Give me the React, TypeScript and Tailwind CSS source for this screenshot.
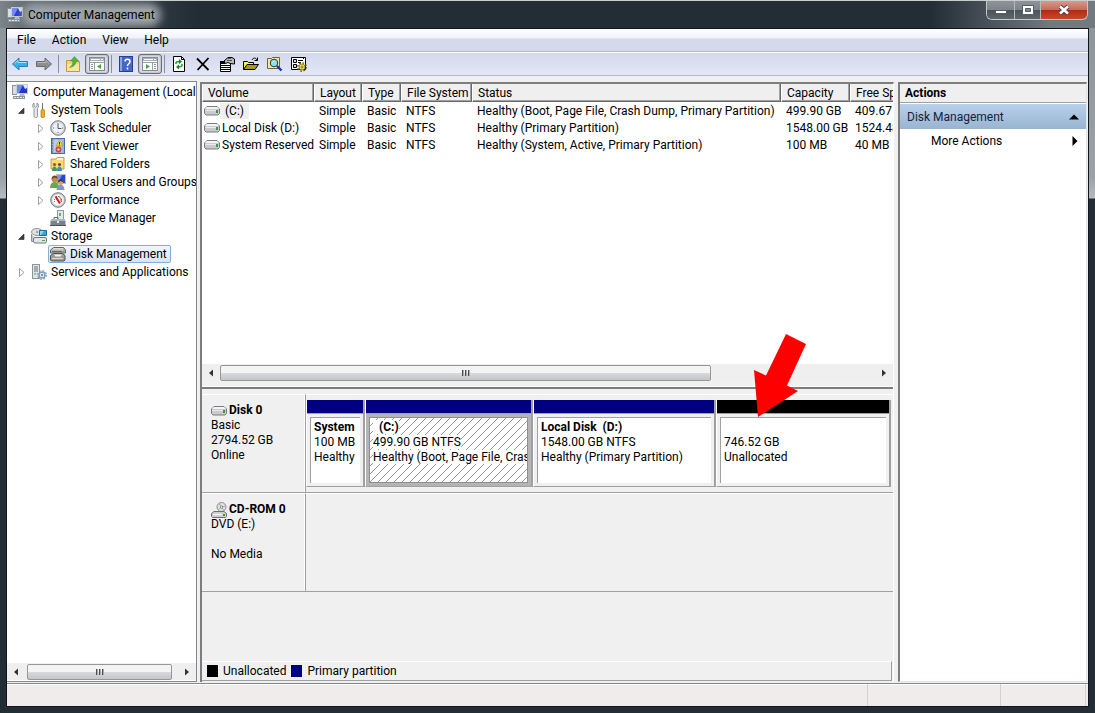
import type { ReactNode } from 'react';

type IconProps = { className?: string };

function Svg({ children, className = 'w-4 h-4', box = '0 0 16 16' }: { children: ReactNode; className?: string; box?: string }) {
  return (
    <svg viewBox={box} className={`${className} shrink-0`} fill="none" aria-hidden="true">
      {children}
    </svg>
  );
}

function ComputerIcon({ className }: IconProps) {
  return (
    <Svg className={className}>
      <rect x="0.5" y="1.5" width="4" height="9" fill="#d9dde0" stroke="#8a9299" />
      <rect x="4.5" y="0.5" width="11" height="9" fill="#2438c8" stroke="#c9cdd2" />
      <path d="M5 1h6L7 9H5z" fill="#6f8df0" />
      <path d="M11 1h4v3l-2 1z" fill="#dfe6fb" />
      <path d="M8 10h4l1 2H7z" fill="#b5bbc1" />
      <path d="M1 12h12v3H1z" fill="#8d959b" />
      <path d="M2 13h2v1H2zM5 13h2v1H5zM8 13h2v1H8zM11 13h1v1h-1z" fill="#e9ecee" />
    </Svg>
  );
}

function ToolsIcon() {
  return (
    <Svg>
      <path d="M3 1v3l1.500 1L6 4V1c2 1 2 4 .5 5.500V14c0 2-3.500 2-3.500 0V6.500C1 5 1.500 2 3 1z" fill="#e4e7e9" stroke="#7d858b" strokeWidth="0.8" />
      <path d="M11 1h1v7h-1z" fill="#6f767b" />
      <rect x="10" y="7.500" width="3.500" height="8" rx="1" fill="#f4a916" stroke="#b87708" strokeWidth="0.700" />
    </Svg>
  );
}

function ClockIcon() {
  return (
    <Svg>
      <circle cx="8" cy="8" r="7.300" fill="#c9ccd0" stroke="#7c8084" />
      <circle cx="8" cy="8" r="5.500" fill="#eaf3fb" stroke="#dedede" />
      <path d="M8 4v4.500h3.500" stroke="#555" />
      <path d="M8 3v1M8 12v1M3 8h1M12 8h1" stroke="#8a6d3c" />
    </Svg>
  );
}

function EventIcon() {
  return (
    <Svg>
      <rect x="1.500" y="0.500" width="13" height="15" fill="#9db4dc" stroke="#486aa8" />
      <path d="M4 3h8M4 5h8M4 7h8M4 9h8M4 11h8M4 13h8" stroke="#dbe6f7" />
      <path d="M1 2h2M1 5h2M1 8h2M1 11h2M1 14h2" stroke="#4c5a6e" />
      <path d="M9.500 2l3.500 6H6z" fill="#ffd42a" stroke="#b38b00" strokeWidth="0.600" />
      <path d="M9.500 4v2M9.500 6.500v1" stroke="#333" />
      <circle cx="8.500" cy="11.500" r="3" fill="#d8432f" />
      <circle cx="8.500" cy="11.500" r="1.200" fill="#f7c6bd" />
    </Svg>
  );
}

function SharedFolderIcon() {
  return (
    <Svg>
      <path d="M1 3h5l1-1.500h7V13H1z" fill="#f6d97a" stroke="#c79f38" />
      <path d="M7 3h6" stroke="#fff7cf" strokeWidth="2" />
      <circle cx="4.500" cy="8.500" r="1.600" fill="#8e5a2b" />
      <circle cx="9.500" cy="8.500" r="1.600" fill="#6d4a2c" />
      <path d="M2 15c0-6 5-6 5 0z" fill="#3f9b5a" />
      <path d="M7 15c0-6 5-6 5 0z" fill="#3b8fc4" />
    </Svg>
  );
}

function UsersIcon() {
  return (
    <Svg>
      <rect x="6.500" y="0.500" width="9" height="9" fill="#2b48cc" stroke="#bcc2c9" />
      <path d="M7 1h5L8 9H7z" fill="#7995f0" />
      <circle cx="4.500" cy="5.500" r="2.800" fill="#c98a52" />
      <path d="M1.500 5.500c0-5 6-5 6-1L4.500 3.500z" fill="#704321" />
      <path d="M0 14c0-8 9-8 9 0z" fill="#6aa84d" />
      <circle cx="10.500" cy="8.500" r="2.500" fill="#d9a26b" />
      <path d="M8 8.500c0-4 5-4 5-.5L10.500 7z" fill="#3d2b20" />
      <path d="M6.500 16c0-7 8-7 8 0z" fill="#7f96c2" />
    </Svg>
  );
}

function PerformanceIcon() {
  return (
    <Svg>
      <circle cx="8" cy="8" r="7.300" fill="#c4c7ca" stroke="#797d80" />
      <circle cx="8" cy="8" r="5.500" fill="#fff" stroke="#e3e3e3" />
      <path d="M4.500 10V6M11.500 10V6M6 4.500h4" stroke="#7a7a7a" strokeDasharray="1 1" />
      <path d="M5.500 4.500l4.500 7" stroke="#d01818" strokeWidth="2" />
      <path d="M9 4.500c1.500 1 2.500 2.500 2 5" stroke="#d01818" />
    </Svg>
  );
}

function DeviceIcon() {
  return (
    <Svg>
      <rect x="7.500" y="0.500" width="6" height="9" fill="#e6e9eb" stroke="#8f979c" />
      <path d="M9 3h2v3H9z" fill="#58b85a" />
      <path d="M4 9V7.500h4V9" stroke="#5c656c" />
      <path d="M2 9h12l1.500 2v4H0.500v-4z" fill="#77838d" />
      <path d="M2 9h12l1.500 2H0.500z" fill="#aeb8c0" />
      <path d="M0 15h16v1H0z" fill="#4b545b" />
      <path d="M7 11h2v2H7z" fill="#e8ecef" />
    </Svg>
  );
}

function StorageIcon() {
  return (
    <Svg>
      <ellipse cx="6" cy="4" rx="5.500" ry="3.500" fill="#dfe3e2" stroke="#8d9392" />
      <circle cx="6" cy="4" r="1.200" fill="#a1a7a6" />
      <path d="M8.500 2.500h7v5h-7z" fill="#35a3dc" stroke="#1c6c9c" />
      <path d="M9 3h4l-3 4H9z" fill="#90d6f6" />
      <path d="M0.500 6v7.500h6" stroke="#8d9392" fill="#c5cac9" />
      <rect x="2.500" y="9.500" width="13" height="5.500" rx="1.500" fill="#e3e6e8" stroke="#71787d" />
      <path d="M11 12h3v1h-3z" fill="#2db52d" />
    </Svg>
  );
}

function DiskStackIcon() {
  return (
    <Svg>
      <path d="M3.500 1.500h10l2 2.500v3h-15V4z" fill="#b5b4b0" stroke="#63625d" />
      <path d="M3.500 2h9l1 1.500H2.500z" fill="#dededc" />
      <path d="M2 5.500h10" stroke="#6b6a65" />
      <path d="M3.500 7.500h9l2.500 2v4.500l-1 1H1.500l-1-1V9.500z" fill="#9d9c97" stroke="#55544f" />
      <path d="M4 8.500h8l-1.500 2H5.500z" fill="#f4f4f2" />
      <path d="M2 12.500h11" stroke="#dcdcd8" />
      <path d="M13 4.500h1.500v1.500H13z" fill="#3fd13f" />
    </Svg>
  );
}

function ServicesIcon() {
  return (
    <Svg>
      <rect x="1.500" y="0.500" width="7" height="14" fill="#dfe4e8" stroke="#8c959b" />
      <path d="M3 3h4M3 5h4M3 7h4" stroke="#6d767c" />
      <path d="M3 10h2" stroke="#3bb03b" />
      <circle cx="11" cy="11" r="3" stroke="#7f9db9" strokeWidth="1.600" fill="#e5eef6" />
      <circle cx="11" cy="11" r="4.400" stroke="#7f9db9" strokeWidth="1.200" strokeDasharray="1.700 1.750" />
      <circle cx="11" cy="11" r="1" fill="#54728e" />
    </Svg>
  );
}

function DriveIcon() {
  return (
    <Svg className="w-4 h-2.5" box="0 0 16 10">
      <path d="M3 0.500h10l2.500 2.500v4.500l-1.500 1.500H2L0.500 7.500V3z" fill="#c9c9ce" stroke="#7b7b80" />
      <path d="M3 1h10l2 2H1z" fill="#f4f4f6" />
      <path d="M1.500 4.500h11" stroke="#e9e9ee" />
      <path d="M12 4h2v3h-2z" fill="#3c9a3c" />
    </Svg>
  );
}

function CdDriveIcon() {
  return (
    <Svg>
      <circle cx="10.500" cy="5" r="4.500" fill="#dfe3df" stroke="#8c8f8c" />
      <path d="M10.500 5L8 1.500M10.500 5l4-1" stroke="#cf8bd6" />
      <path d="M10.500 5l-3 2.500M10.500 5l2 3" stroke="#7fca82" />
      <circle cx="10.500" cy="5" r="1.200" fill="#fff" stroke="#888" />
      <path d="M3 9.500h10l2.500 2v3l-1 1H1.500l-1-1v-3z" fill="#cfcfd3" stroke="#6f6f74" />
      <path d="M2 12.500h9" stroke="#f8f8f8" />
      <path d="M12 12h2v2h-2z" fill="#3c9a3c" />
    </Svg>
  );
}

function PaneIcon({ flip = false }: { flip?: boolean }) {
  return (
    <Svg>
      <rect x="0.500" y="1.500" width="15" height="13" fill="#fff" stroke="#858b92" />
      <path d="M1 2h14v3H1z" fill="#a9afb5" />
      <path d="M2 3.500h9M12 3.500h2" stroke="#fff" />
      <path d="M1 6.500h14" stroke="#9aa0a6" />
      {flip ? (
        <>
          <path d="M10.500 6v8" stroke="#9aa0a6" />
          <path d="M12 8.500h2M12 10.500h2M12 12.500h2" stroke="#8f969c" />
          <path d="M4 8l4 2.500L4 13z" fill="#3eaa3e" />
        </>
      ) : (
        <>
          <path d="M5.500 6v8" stroke="#9aa0a6" />
          <path d="M2 8.500h2M2 10.500h2M2 12.500h2" stroke="#8f969c" />
          <path d="M12 8l-4 2.500L12 13z" fill="#3eaa3e" />
        </>
      )}
    </Svg>
  );
}

function ToolButton({ label, pressed = false, children }: { label: string; pressed?: boolean; children: ReactNode }) {
  return (
    <button
      type="button"
      aria-label={label}
      className={
        pressed
          ? 'w-6 h-5 flex items-center justify-center rounded-[3px] border border-[#6b6e78] bg-[#dadde6] shadow-[inset_0_0_2px_#8a8d96]'
          : 'w-6 h-5 flex items-center justify-center'
      }
    >
      {children}
    </button>
  );
}

function Separator() {
  return <div className="w-px h-[18px] mx-0.5 bg-[#8b8f9c]" />;
}

function Toolbar() {
  return (
    <div className="h-6 shrink-0 flex items-center pl-px border-t border-b border-t-white border-b-[#b3b7c6] bg-linear-to-b from-[#d3d9ec] to-[#e3e7f6]">
      <ToolButton label="Back">
        <Svg>
          <path d="M0.500 8L7 2v3.500h8.500v5H7V14z" fill="#35b0ea" stroke="#2b7db5" />
          <path d="M2.500 7.500L6 4.500v2h8.500" stroke="#a4e0f8" />
        </Svg>
      </ToolButton>
      <ToolButton label="Forward">
        <Svg>
          <path d="M15.500 8L9 2v3.500H0.500v5H9V14z" fill="#8e8e8e" stroke="#6a6a6a" />
          <path d="M1.500 6.500H10v-2L13.500 7.500" stroke="#b9b9b9" />
        </Svg>
      </ToolButton>
      <Separator />
      <ToolButton label="Up one level">
        <Svg>
          <path d="M1.500 4.500h5l1 1h7v10h-13z" fill="#f2d279" stroke="#c69a3b" />
          <path d="M2 8h12v7H2z" fill="#fae6a0" />
          <path d="M4.500 11.500C7 10 8 8 8 5H5.500L9.500 0.500l4 4.500H11c0 4-3 6-6.500 6.500z" fill="#53b63c" stroke="#2f8f20" strokeWidth="0.500" />
        </Svg>
      </ToolButton>
      <ToolButton label="Show/Hide Console Tree" pressed>
        <PaneIcon />
      </ToolButton>
      <Separator />
      <ToolButton label="Help">
        <Svg>
          <rect x="1.500" y="0.500" width="13" height="15" fill="#4467c8" stroke="#263f92" />
          <path d="M2 1h2v14H2z" fill="#8ca5e6" />
          <path d="M7 5.500C7 2.500 12 2.500 12 5.500C12 8 9.500 7.500 9.500 10M9.500 11.500v2" stroke="#fff" strokeWidth="1.500" />
        </Svg>
      </ToolButton>
      <ToolButton label="Show/Hide Action Pane" pressed>
        <PaneIcon flip />
      </ToolButton>
      <Separator />
      <ToolButton label="Refresh">
        <Svg>
          <path d="M2.500 0.500h8l3 3v12h-11z" fill="#fff" stroke="#000" />
          <path d="M10.500 0.500v3h3" stroke="#000" />
          <path d="M5 8V6.500C5 5.500 6 5.500 9 5.500M11 8v1.500c0 1-1 1.500-4 1.500" stroke="#0b8a1c" strokeWidth="1.300" />
          <path d="M8 3l3 2.500L8 8zM8 8.500L5 11l3 2.500z" fill="#0b8a1c" />
        </Svg>
      </ToolButton>
      <ToolButton label="Delete">
        <Svg>
          <path d="M2 2.500l11.500 11.500M13.500 2L2.500 14" stroke="#000" strokeWidth="1.800" />
        </Svg>
      </ToolButton>
      <ToolButton label="Properties">
        <Svg>
          <path d="M1.500 5.500h10v10h-10z" fill="#fff" stroke="#000" />
          <path d="M1 5h5v3H1z" fill="#000" />
          <path d="M2 9.500h9M2 11.500h9M2 13.500h9" stroke="#000" />
          <path d="M5 5l4-3.500h4L15.500 3v5L11 7.500 9 6.500 6.500 7.500z" fill="#b9b9b9" stroke="#000" />
          <path d="M8 4.500h5M9 2.500h3" stroke="#555" />
        </Svg>
      </ToolButton>
      <ToolButton label="Open">
        <Svg>
          <path d="M0.500 13.500v-8h4l1 1h5v2" fill="#fff04a" stroke="#000" />
          <path d="M0.500 13.500L4 8.500h11.500L12 13.500z" fill="#a8991c" stroke="#000" />
          <path d="M9 4c1-2.500 4-2.500 5 0M14.500 1.500v3h-3" stroke="#000" />
        </Svg>
      </ToolButton>
      <ToolButton label="Find">
        <Svg>
          <path d="M0.500 2.500h4l1-1h7v11h-12z" fill="#f4e9a0" stroke="#6c6446" />
          <circle cx="7" cy="7" r="3.800" fill="#86e4ee" stroke="#333" />
          <path d="M5.500 6.500l2-1.500" stroke="#fff" />
          <path d="M10 10l4.500 4.500" stroke="#1533b8" strokeWidth="2.400" />
        </Svg>
      </ToolButton>
      <ToolButton label="Settings">
        <Svg>
          <path d="M0.500 1.500h14v12H0.500z" fill="#fff" stroke="#000" />
          <path d="M2.500 3.500h3v3h-3zM2.500 8.500h3v3h-3z" stroke="#000" fill="#ddd" />
          <path d="M7 4.500h5M7 6.500h3M12 2.500h1" stroke="#000" />
          <circle cx="11" cy="11" r="4.200" stroke="#5d5310" strokeWidth="1.400" strokeDasharray="1.600 1.700" />
          <circle cx="11" cy="11" r="3" fill="#f7e23c" stroke="#6d6210" strokeWidth="0.700" />
          <circle cx="11" cy="11" r="1" fill="#fff" stroke="#000" strokeWidth="0.500" />
        </Svg>
      </ToolButton>
    </div>
  );
}

function TitleBar() {
  return (
    <header className="h-[27px] shrink-0 flex items-start justify-between pl-[7px] pr-[7px]">
      <div className="h-[27px] flex items-center gap-[5px]">
        <ComputerIcon className="w-4 h-4" />
        <h1 className="h-3 flex items-center rounded-full bg-[#9ba2a6] shadow-[0_0_8px_6px_#9ba2a6]">Computer Management</h1>
      </div>
      <div className="flex h-[19px] rounded-b-md border border-t-0 border-[#c3c8cb] overflow-hidden">
        <button type="button" aria-label="Minimize" className="w-7 flex items-center justify-center border-r border-[#b5babd] bg-[linear-gradient(to_bottom,#8d9498,#7d858a_50%,#4b545b_51%,#5d666c)]">
          <Svg className="w-3 h-3" box="0 0 12 12">
            <rect x="0.500" y="6.500" width="11" height="3" fill="#fff" stroke="#555d66" />
          </Svg>
        </button>
        <button type="button" aria-label="Maximize" className="w-[26px] flex items-center justify-center border-r border-[#b5babd] bg-[linear-gradient(to_bottom,#8d9498,#7d858a_50%,#4b545b_51%,#5d666c)]">
          <Svg className="w-3 h-3" box="0 0 12 12">
            <path d="M0.500 1.500h11v9h-11z" fill="#fff" stroke="#555d66" />
            <path d="M3.500 4.500h5v3h-5z" fill="#7b848b" stroke="#555d66" />
          </Svg>
        </button>
        <button type="button" aria-label="Close" className="w-[46px] flex items-center justify-center bg-[linear-gradient(to_bottom,#d59a8f,#c76a58_50%,#b02a12_51%,#c9472c)]">
          <Svg className="w-3 h-3" box="0 0 12 12">
            <path d="M2 2.500l8 7M10 2.500l-8 7" stroke="#5a3a44" strokeWidth="4.500" />
            <path d="M2 2.500l8 7M10 2.500l-8 7" stroke="#fff" strokeWidth="2.600" />
          </Svg>
        </button>
      </div>
    </header>
  );
}

function HScrollbar({ thumb }: { thumb: string }) {
  return (
    <div className="h-[17px] shrink-0 flex items-center bg-[#efefef]">
      <button type="button" aria-label="Scroll left" className="w-[18px] flex justify-center">
        <Svg className="w-1 h-2" box="0 0 4 8">
          <path d="M4 0.500v7L0 4z" fill="#333" />
        </Svg>
      </button>
      <div className="flex-1 h-4">
        <div className={`${thumb} h-4 flex items-center justify-center gap-px rounded-[2px] border border-[#979797] bg-linear-to-b from-[#f4f4f4] from-50% via-[#d9dadc] via-50% to-[#c4c5c8]`}>
          <span className="w-0.5 h-1.5 border-l border-[#4d4d4d] bg-[#aaa]" />
          <span className="w-0.5 h-1.5 border-l border-[#4d4d4d] bg-[#aaa]" />
          <span className="w-0.5 h-1.5 border-l border-[#4d4d4d] bg-[#aaa]" />
        </div>
      </div>
      <button type="button" aria-label="Scroll right" className="w-[18px] flex justify-center">
        <Svg className="w-1 h-2" box="0 0 4 8">
          <path d="M0 0.500v7L4 4z" fill="#333" />
        </Svg>
      </button>
    </div>
  );
}

function Expander({ state }: { state?: 'open' | 'closed' }) {
  return (
    <Svg className="w-2.5 h-2.5" box="0 0 10 10">
      {state === 'open' && <path d="M8 3v5.500H2.500z" fill="#404040" stroke="#262626" strokeWidth="0.600" />}
      {state === 'closed' && <path d="M3.500 1.500v8l4.500-4z" fill="#fff" stroke="#a0a0a0" />}
    </Svg>
  );
}

const tree: { label: string; level: 1 | 2; state?: 'open' | 'closed'; icon: ReactNode; selected?: boolean }[] = [
  { label: 'System Tools', level: 1, state: 'open', icon: <ToolsIcon /> },
  { label: 'Task Scheduler', level: 2, state: 'closed', icon: <ClockIcon /> },
  { label: 'Event Viewer', level: 2, state: 'closed', icon: <EventIcon /> },
  { label: 'Shared Folders', level: 2, state: 'closed', icon: <SharedFolderIcon /> },
  { label: 'Local Users and Groups', level: 2, state: 'closed', icon: <UsersIcon /> },
  { label: 'Performance', level: 2, state: 'closed', icon: <PerformanceIcon /> },
  { label: 'Device Manager', level: 2, icon: <DeviceIcon /> },
  { label: 'Storage', level: 1, state: 'open', icon: <StorageIcon /> },
  { label: 'Disk Management', level: 2, icon: <DiskStackIcon />, selected: true },
  { label: 'Services and Applications', level: 1, state: 'closed', icon: <ServicesIcon /> },
];

function ConsoleTree() {
  return (
    <nav className="w-[190px] shrink-0 flex flex-col border border-l-0 border-[#828790] bg-white overflow-hidden">
      <ul className="flex-1 pt-px whitespace-nowrap overflow-hidden">
        <li className="h-[18px] flex items-center gap-[5px] pl-[5px]">
          <ComputerIcon />
          Computer Management (Local
        </li>
        {tree.map((item) => (
          <li key={item.label} className={item.level === 1 ? 'h-[18px] flex items-center pl-[9px]' : 'h-[18px] flex items-center pl-7'}>
            <Expander state={item.state} />
            <span
              className={
                item.selected
                  ? 'h-[18px] flex items-center gap-1 ml-[3px] pl-px pr-[3px] rounded-[2px] border border-[#84acdd] bg-linear-to-b from-[#f0f6fe] to-[#d5e5fb]'
                  : 'h-[18px] flex items-center gap-1 ml-[5px]'
              }
            >
              {item.icon}
              {item.label}
            </span>
          </li>
        ))}
      </ul>
      <div className="pb-px">
        <HScrollbar thumb="w-[95%] ml-0.5" />
      </div>
    </nav>
  );
}

const columns = [
  { name: 'Volume', width: 'w-28' },
  { name: 'Layout', width: 'w-12' },
  { name: 'Type', width: 'w-[39px]' },
  { name: 'File System', width: 'w-[71px]' },
  { name: 'Status', width: 'w-[309px]' },
  { name: 'Capacity', width: 'w-[69px]' },
  { name: 'Free Space', width: 'w-[90px]' },
];

const volumes = [
  ['(C:)', 'Simple', 'Basic', 'NTFS', 'Healthy (Boot, Page File, Crash Dump, Primary Partition)', '499.90 GB', '409.67 GB'],
  ['Local Disk (D:)', 'Simple', 'Basic', 'NTFS', 'Healthy (Primary Partition)', '1548.00 GB', '1524.48 GB'],
  ['System Reserved', 'Simple', 'Basic', 'NTFS', 'Healthy (System, Active, Primary Partition)', '100 MB', '40 MB'],
];

function VolumeList() {
  return (
    <div className="flex-[283] min-h-0 overflow-hidden bg-white">
      <table className="w-[738px] table-fixed border-separate border-spacing-0 whitespace-nowrap">
        <thead>
          <tr>
            {columns.map((col) => (
              <th
                key={col.name}
                scope="col"
                className={`${col.width} h-[18px] px-[5px] pt-px pb-0 font-normal text-left bg-[#efefef] border-l border-l-white border-r border-r-[#696969] border-b border-b-[#696969] shadow-[inset_-1px_-1px_0_#a0a0a0]`}
              >
                {col.name}
              </th>
            ))}
          </tr>
        </thead>
        <tbody>
          {volumes.map((row, i) => (
            <tr key={row[0]}>
              {row.map((cell, j) => (
                <td key={j} className={j === 0 ? 'h-[17px] p-0 pl-0.5' : 'h-[17px] p-0 pl-[5px]'}>
                  {j === 0 ? (
                    <span className="flex items-center">
                      <DriveIcon />
                      <span className={i === 0 ? 'px-[5px] bg-[#efefef]' : 'pl-0.5'}>{cell}</span>
                    </span>
                  ) : (
                    cell
                  )}
                </td>
              ))}
            </tr>
          ))}
        </tbody>
      </table>
    </div>
  );
}

function DiskRow({ icon, name, lines, children }: { icon: ReactNode; name: string; lines: string[]; children?: ReactNode }) {
  return (
    <section className="h-[99px] flex border-b border-[#a0a0a0]">
      <div className="w-[104px] shrink-0 pt-2 pl-[9px] border-t border-t-white border-r border-r-[#a0a0a0] shadow-[inset_-1px_0_0_#fff] leading-[15px]">
        <h2 className="h-[15px] flex items-center gap-0.5 font-bold">
          {icon}
          {name}
        </h2>
        {lines.map((line, i) => (
          <p key={i} className="h-[15px]">{line}</p>
        ))}
      </div>
      <div className="flex-1 min-w-0 border-t border-white">{children}</div>
    </section>
  );
}

function Partition({ name, size, status, kind = 'primary', selected = false, children }: {
  name: string;
  size: string;
  status: string;
  kind?: 'primary' | 'unallocated';
  selected?: boolean;
  children?: ReactNode;
}) {
  return (
    <div className="relative min-w-0 flex flex-col border-l border-l-white border-r-2 border-b border-r-[#a0a0a0] border-b-[#a0a0a0]">
      <div className={kind === 'primary' ? 'h-[13px] bg-[#000080]' : 'h-[13px] bg-black'} />
      <div className={selected ? 'h-[73px] p-[3px] border-t border-[#a0a0a0] bg-[#b4b4b4]' : 'h-[73px] p-[3px] border-t border-[#a0a0a0]'}>
        <div
          className={
            selected
              ? 'h-full pt-0.5 pl-[3px] border border-[#909090] overflow-hidden whitespace-nowrap leading-[15px] bg-white bg-[linear-gradient(135deg,transparent_44%,#999_50%,transparent_56%)] bg-[length:8px_8px]'
              : 'h-full pt-0.5 pl-[3px] border-t border-l border-[#a0a0a0] overflow-hidden whitespace-nowrap leading-[15px] bg-white'
          }
        >
          <p className="h-[15px] font-bold whitespace-pre"><span className={selected ? 'bg-white' : ''}>{name}</span></p>
          <p><span className={selected ? 'bg-white' : ''}>{size}</span></p>
          <p><span className={selected ? 'bg-white' : ''}>{status}</span></p>
        </div>
      </div>
      {children}
    </div>
  );
}

function Legend() {
  return (
    <div className="h-5 mr-px mb-px shrink-0 flex items-center pl-[5px] gap-[5px] border-t border-t-white border-r border-r-[#a0a0a0] border-b border-b-[#a0a0a0]">
      <span className="flex items-center gap-[5px]">
        <i className="w-[11px] h-3 bg-black" />
        Unallocated
      </span>
      <span className="flex items-center gap-[5px]">
        <i className="w-[11px] h-3 bg-[#000080]" />
        Primary partition
      </span>
    </div>
  );
}

function DiskPane() {
  return (
    <div className="flex-[291] min-h-0 flex flex-col pt-[5px]">
      <div className="flex-1">
        <DiskRow icon={<DriveIcon />} name="Disk 0" lines={['Basic', '2794.52 GB', 'Online']}>
          <div className="grid grid-cols-[59fr_168fr_183fr_175fr] pt-[5px] pr-0.5">
            <Partition name="System" size="100 MB" status="Healthy" />
            <Partition name="  (C:)" size="499.90 GB NTFS" status="Healthy (Boot, Page File, Crash Dump, Primary Partition)" selected />
            <Partition name="Local Disk  (D:)" size="1548.00 GB NTFS" status="Healthy (Primary Partition)" />
            <Partition name="" size="746.52 GB" status="Unallocated" kind="unallocated">
              <svg viewBox="0 0 54 84" className="absolute left-9 -top-[66px] w-[54px] h-[84px]" aria-hidden="true">
                <path d="M33 0l20 10-19 41.500 11 5.500L5 83 1 36l12 5.500z" fill="#fe0000" />
              </svg>
            </Partition>
          </div>
        </DiskRow>
        <DiskRow icon={<CdDriveIcon />} name="CD-ROM 0" lines={['DVD (E:)', '', 'No Media']} />
      </div>
      <Legend />
    </div>
  );
}

function ActionsPane() {
  return (
    <aside className="w-[189px] mt-px mr-px shrink-0 flex flex-col border-t-2 border-l-2 border-r border-b border-t-[#7d7d7d] border-l-[#7d7d7d] border-r-[#e3e3e3] border-b-[#e3e3e3] bg-white">
      <h2 className="h-[19px] flex items-center pl-[5px] font-bold bg-[#efefef] border-b border-[#a0a0a0]">Actions</h2>
      <button type="button" className="h-[25px] mt-px flex items-center justify-between pl-[7px] pr-[7px] bg-linear-to-b from-[#b9d1ea] to-[#99b4d1] text-[#14233a]">
        Disk Management
        <Svg className="w-2.5 h-1.5" box="0 0 10 6">
          <path d="M5 0.500l5 5H0z" fill="#000" />
        </Svg>
      </button>
      <button type="button" className="h-6 flex items-center justify-between pl-[31px] pr-2">
        More Actions
        <Svg className="w-1.5 h-2.5" box="0 0 6 10">
          <path d="M0.500 0v10l5-5z" fill="#000" />
        </Svg>
      </button>
    </aside>
  );
}

export default function App() {
  return (
    <div className="h-screen flex flex-col font-[Roboto,'Open_Sans',sans-serif] text-[12px] leading-4 text-black border-t border-[#c8cdd0] bg-[linear-gradient(to_right,#7b8589,#59636a_3%,#3a444c_10%,#232d36_18%,#232d36_85%,#717a80_96%,#717a80)] overflow-hidden">
      <TitleBar />
      <div className="flex-1 min-h-0 flex flex-col px-[6px] pb-[6px] bg-[linear-gradient(to_bottom,#8d979b,#99a2a6_150px,#b5bcbf_170px,#232d36_171px)]">
        <div className="flex-1 min-h-0 flex flex-col border border-[#10161c] bg-[#f0f0f0]">
          <nav aria-label="Menu" className="h-[23px] shrink-0 flex items-center pl-[2px] border-b border-[#b3b7c6] bg-[linear-gradient(to_bottom,#fff,#f0f2fa_9px,#d4d9ec_10px,#d4d9ec)]">
            <button type="button" className="px-2">File</button>
            <button type="button" className="px-2">Action</button>
            <button type="button" className="px-2">View</button>
            <button type="button" className="px-2">Help</button>
          </nav>
          <Toolbar />
          <main className="flex-1 min-h-0 flex pt-[5px] pb-px">
            <ConsoleTree />
            <div className="flex-1 min-w-0 mt-px ml-[3px] mr-1 flex flex-col border-t-2 border-l-2 border-t-[#7d7d7d] border-l-[#7d7d7d] border-r border-r-white">
              <VolumeList />
              <HScrollbar thumb="w-3/4" />
              <div className="h-2 shrink-0 border-b-2 border-[#7d7d7d] shadow-[inset_0_-1px_0_#fff]" />
              <DiskPane />
            </div>
            <ActionsPane />
          </main>
          <footer className="h-[23px] shrink-0 flex justify-end pr-0.5 border-t border-[#828790] bg-[#f0eceb] shadow-[inset_0_1px_0_#fff]">
            <div className="w-[133px] border-l border-[#d2d2d2]" />
            <div className="w-[86px] border-l border-r border-[#d2d2d2]" />
          </footer>
        </div>
      </div>
    </div>
  );
}
